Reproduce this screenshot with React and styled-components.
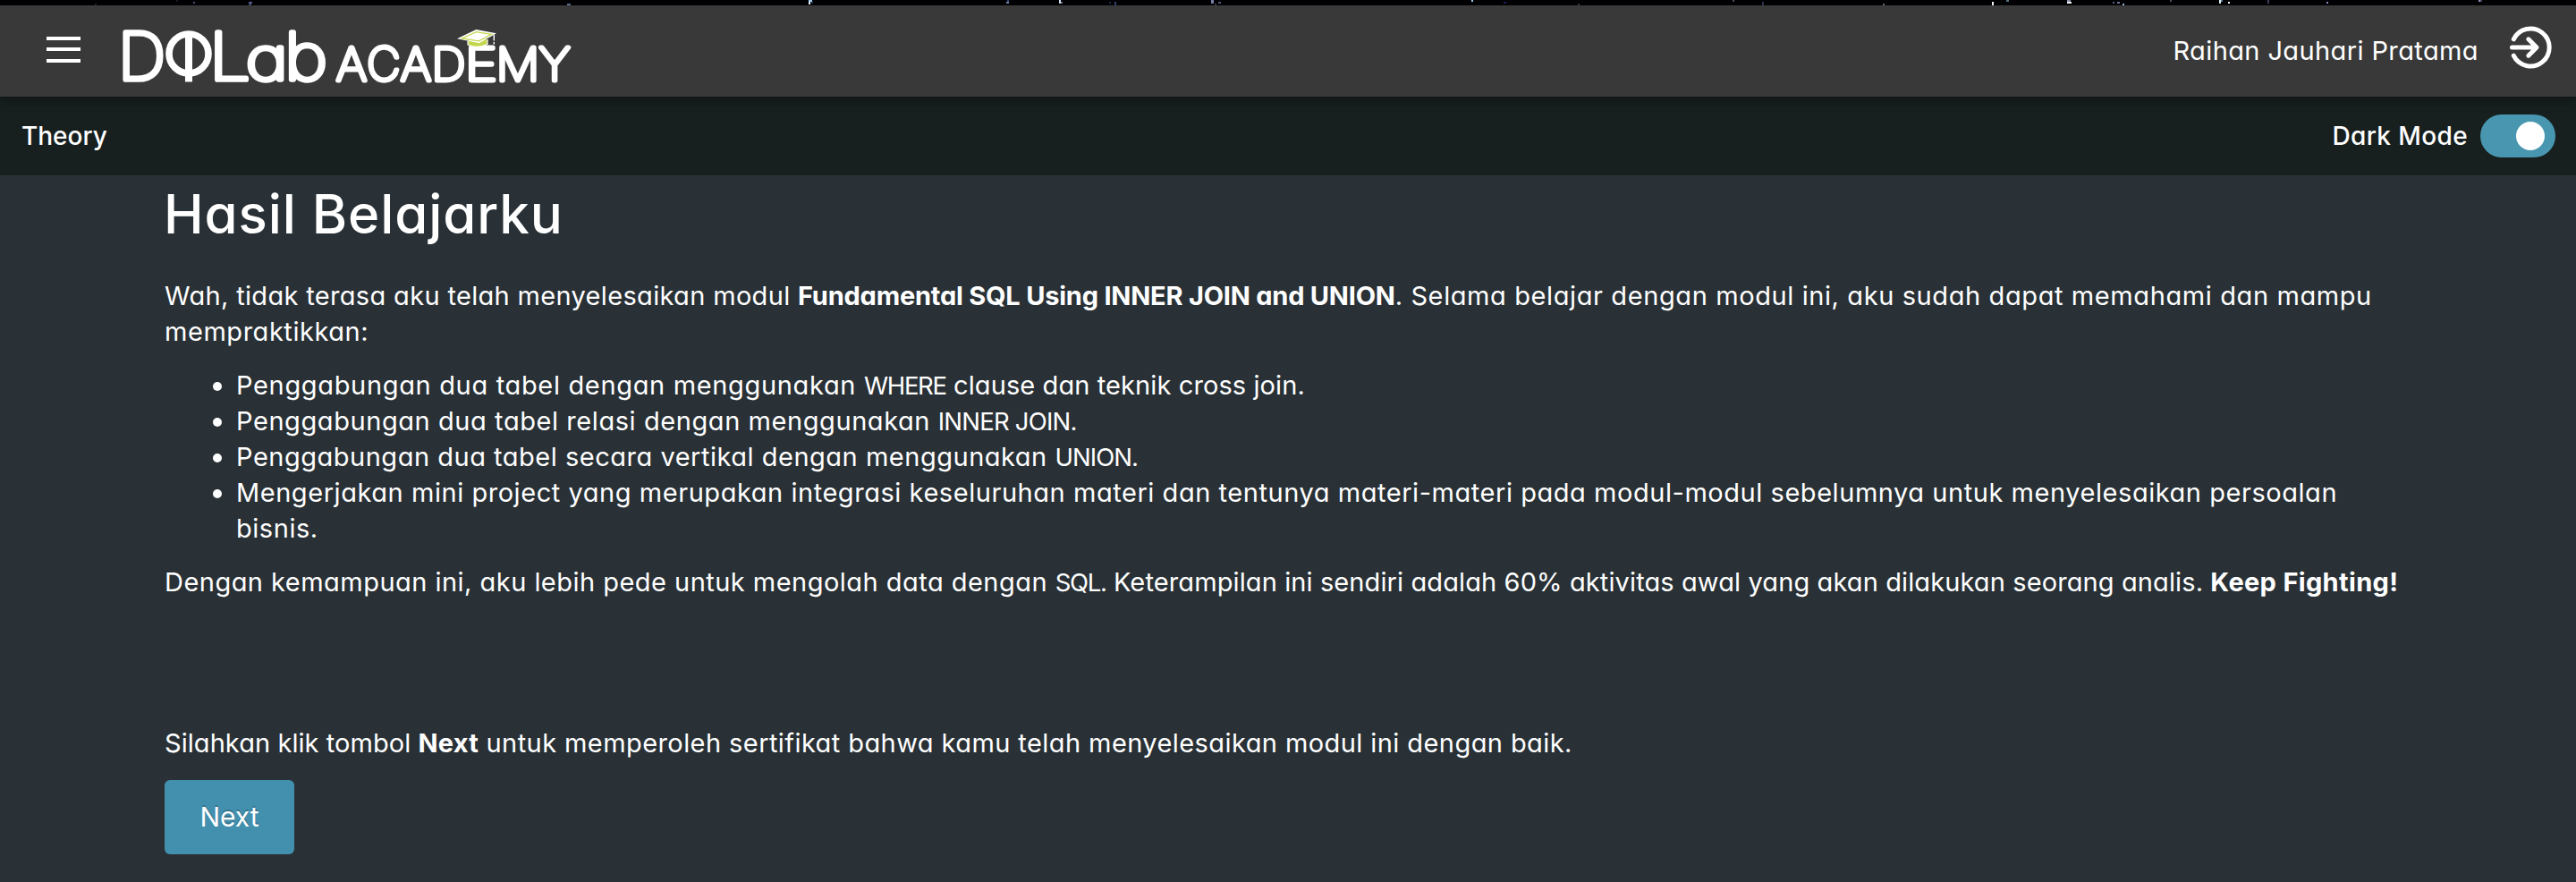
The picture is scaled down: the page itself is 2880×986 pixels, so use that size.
import React, { useState } from 'react';
import styled, { createGlobalStyle } from 'styled-components';

const GlobalStyle = createGlobalStyle`
  * { box-sizing: border-box; }
  body {
    margin: 0;
    background: #293136;
    color: #fff;
    font-family: Inter, "Liberation Sans", sans-serif;
    font-feature-settings: "cv11";
    font-size: 28px;
    line-height: 40px;
  }
`;

const Page = styled.div`
  display: flex;
  flex-direction: column;
  min-height: 986px;
`;

const StarStrip = styled.svg`
  display: block;
  width: 100%;
  height: 6px;
  background: #000003;
`;

const TopBar = styled.header`
  display: flex;
  align-items: center;
  height: 102px;
  padding: 0 27px 0 50px;
  background: #393939;
  box-shadow: 0 4px 12px rgba(0, 0, 0, 0.35);
  z-index: 1;
`;

const IconButton = styled.button`
  display: flex;
  padding: 0 0 ${(p) => p.$lift ?? 0}px;
  border: 0;
  background: none;
  color: #fff;
  cursor: pointer;
`;

const Logo = styled.svg`
  display: block;
  margin-left: 38px;
  overflow: visible;
  font-family: Inter, "Liberation Sans", sans-serif;
  font-weight: 100;
`;

const Account = styled.div`
  display: flex;
  align-items: center;
  gap: 34px;
  margin-left: auto;
  padding-bottom: 8px;
`;

const UserName = styled.span`
  font-size: 29px;
  letter-spacing: 0.39px;
  padding-top: 8px;
`;

const SubBar = styled.div`
  display: flex;
  align-items: center;
  justify-content: space-between;
  height: 88px;
  padding: 0 23px 0 24px;
  background: #17201f;
  font-weight: 500;
`;

const ModeSwitch = styled.label`
  display: flex;
  align-items: center;
  gap: 14px;
  letter-spacing: 0.38px;
`;

const Track = styled.button`
  display: flex;
  align-items: center;
  justify-content: ${(p) => (p.$on ? 'flex-end' : 'flex-start')};
  width: 84px;
  height: 48px;
  padding: 0 12px;
  border: 0;
  border-radius: 24px;
  background: ${(p) => (p.$on ? '#4896b0' : '#8a9499')};
`;

const Knob = styled.span`
  width: 32px;
  height: 32px;
  border-radius: 50%;
  background: #fff;
`;

const Content = styled.main`
  padding: 7px 184px 0;
  font-size: 29px;
`;

const Title = styled.h1`
  margin: 0 0 36px -1px;
  font-size: 60px;
  font-weight: 500;
  line-height: 72px;
  letter-spacing: 0.9px;
`;

const Paragraph = styled.p`
  margin: 0 0 ${(p) => p.$after ?? 20}px;
`;

const Run = styled.span`
  letter-spacing: ${(p) => p.$track}px;
  font-weight: ${(p) => (p.$bold ? 700 : 400)};
`;

const Keyword = styled(Run)`
  font-size: 27.5px;
  line-height: 1;
`;

const List = styled.ul`
  list-style: none;
  margin: 0 0 20px;
  padding: 0 0 0 54px;
`;

const Item = styled.li`
  display: flex;
  gap: 16px;

  &::before {
    content: "";
    flex: none;
    width: 10px;
    height: 10px;
    margin-top: 16px;
    border-radius: 50%;
    background: #fff;
  }
`;

const NextButton = styled.button`
  display: block;
  width: 145px;
  height: 83px;
  padding: 0 0 2px;
  border: 0;
  border-radius: 6px;
  background: #438fae;
  color: #fff;
  font: 400 30px Inter, "Liberation Sans", sans-serif;
  text-shadow: 0 -2px 0 rgba(0, 0, 0, 0.2);
`;

const stars = [
  [106, 4, 2, 2, '#20242c'], [197, 0, 2, 2, '#181c28'], [216, 2, 2, 2, '#4d5580'],
  [278, 2, 4, 2, '#5a6090'], [278, 4, 3, 2, '#404670'], [634, 4, 4, 2, '#5c7795'],
  [904, 0, 4, 2, '#a9d6ff'], [907, 2, 2, 2, '#24405c'], [904, 2, 2, 3, '#fff'],
  [1126, 0, 2, 2, '#36446c'], [1125, 2, 3, 2, '#7582b8'], [1184, 0, 2, 4, '#dce9ff'],
  [1186, 2, 2, 2, '#6e7890'], [1240, 2, 2, 2, '#1c2a4c'], [1246, 2, 2, 4, '#34446c'],
  [1354, 0, 3, 4, '#7c84b0'], [1358, 4, 2, 2, '#404050'], [1362, 2, 3, 2, '#555c7c'],
  [1645, 0, 2, 2, '#a8ccf0'], [1681, 2, 3, 2, '#18205c'], [1764, 4, 2, 2, '#3c3c44'],
  [1937, 0, 2, 2, '#4c4c5c'], [1970, 2, 2, 4, '#2c3458'], [2105, 4, 2, 2, '#6c6c74'],
  [2227, 2, 2, 4, '#fff'], [2243, 0, 3, 2, '#5c7484'], [2311, 0, 4, 2, '#8c94ac'],
  [2311, 2, 5, 2, '#fff'], [2362, 2, 2, 2, '#5c6484'], [2367, 2, 3, 2, '#6c7898'],
  [2373, 4, 2, 2, '#9cc4ec'], [2426, 0, 2, 2, '#54545c'], [2481, 0, 2, 4, '#e8fcff'],
  [2483, 0, 2, 2, '#5c80a4'], [2491, 2, 2, 2, '#fff'], [2535, 0, 2, 4, '#40405c'],
  [2601, 2, 2, 2, '#8c94cc'], [2771, 0, 2, 2, '#8c94bc'], [2773, 0, 2, 2, '#44445c'],
];

const logoLetters = [
  ['D', 132, 89.2, 72, 1.03, 5.7], ['L', 234, 89.2, 73, 1.12, 5.7],
  ['a', 274.8, 89.2, 66, 1.23, 5.4], ['b', 318, 89.2, 72, 1.15, 5.4],
  ['A', 376, 89.6, 51, 1.04, 5], ['C', 410.3, 89.6, 51, 1.01, 5],
  ['A', 448, 89.6, 51, 1.04, 5], ['D', 482.5, 89.6, 51, 1.04, 5],
  ['E', 520, 89.6, 51, 1.2, 5], ['M', 554.8, 89.6, 51, 1.06, 5],
  ['Y', 602.7, 89.6, 51, 1.06, 5],
];

function BrandLogo() {
  return (
    <Logo width="516" height="102" viewBox="130 6 516 102" aria-label="DQLab Academy">
      <g fill="#fff" stroke="#fff" strokeLinejoin="round">
        {logoLetters.map(([char, x, y, size, stretch, weight], i) => (
          <text
            key={i}
            transform={`translate(${x} ${y}) scale(${stretch} 1)`}
            fontSize={size}
            strokeWidth={weight}
          >
            {char}
          </text>
        ))}
      </g>
      <circle cx="211" cy="60" r="22" fill="none" stroke="#fff" strokeWidth="7.6" />
      <rect x="207" y="38" width="8" height="53.5" fill="#fff" />
      <path d="M523 46V50Q533 55 545 49.5V44" fill="#c4d64c" stroke="#fff" strokeWidth="1.2" />
      <path d="M511 43.3L532.3 33L555 37.3L535.7 48.2Z" fill="#fff" />
      <path d="M516.5 43L532.4 35.6L549.5 38.3L535.5 45.9Z" fill="#fff" stroke="#c4d64c" strokeWidth="1.3" />
      <path d="M552.3 39V45.5M552.3 47V49.5" stroke="#fff" strokeWidth="1.4" />
    </Logo>
  );
}

export default function App() {
  const [dark, setDark] = useState(true);
  return (
    <>
      <GlobalStyle />
      <Page>
        <StarStrip>
          {stars.map(([x, y, w, h, fill]) => (
            <rect key={`${x}-${y}`} x={x} y={y} width={w} height={h} fill={fill} />
          ))}
        </StarStrip>
        <TopBar>
          <IconButton $lift={4} aria-label="Menu">
            <svg width="42" height="38" viewBox="50 36 42 38">
              <path d="M52 43H90M52 55H90M52 68H90" stroke="#fff" strokeWidth="3.8" />
            </svg>
          </IconButton>
          <BrandLogo />
          <Account>
            <UserName>Raihan Jauhari Pratama</UserName>
            <IconButton aria-label="Log out">
              <svg width="48" height="50" viewBox="2805 28 48 50" fill="none" stroke="#fff" strokeWidth="5" strokeLinecap="round" strokeLinejoin="round">
                <path d="M2810.3 43.8A21 21 0 1 1 2810.3 62.2" />
                <path d="M2808.5 53H2835M2826.8 43.8L2836 53L2826.8 62.2" />
              </svg>
            </IconButton>
          </Account>
        </TopBar>
        <SubBar>
          <span>Theory</span>
          <ModeSwitch>
            Dark Mode
            <Track $on={dark} onClick={() => setDark(!dark)} aria-label="Dark Mode">
              <Knob />
            </Track>
          </ModeSwitch>
        </SubBar>
        <Content>
          <Title>Hasil Belajarku</Title>
          <Paragraph>
            <Run $track={0.33}>Wah, tidak terasa aku telah menyelesaikan modul </Run>
            <Run $bold $track={-0.22}>Fundamental SQL Using INNER JOIN and UNION</Run>
            <Run $track={0.6}>. Selama belajar dengan modul ini, aku sudah dapat memahami dan mampu </Run>
            <Run $track={0.54}>mempraktikkan:</Run>
          </Paragraph>
          <List>
            <Item>
              <div>
                <Run $track={0.66}>Penggabungan dua tabel dengan menggunakan </Run>
                <Keyword $track={-1.3}>WHERE</Keyword>
                <Run $track={0.1}> clause dan teknik cross join.</Run>
              </div>
            </Item>
            <Item>
              <div>
                <Run $track={0.57}>Penggabungan dua tabel relasi dengan menggunakan </Run>
                <Keyword $track={-0.8}>INNER JOIN.</Keyword>
              </div>
            </Item>
            <Item>
              <div>
                <Run $track={0.51}>Penggabungan dua tabel secara vertikal dengan menggunakan </Run>
                <Keyword $track={-0.95}>UNION.</Keyword>
              </div>
            </Item>
            <Item>
              <Run $track={0.545}>
                Mengerjakan mini project yang merupakan integrasi keseluruhan materi dan tentunya materi-materi pada modul-modul sebelumnya untuk menyelesaikan persoalan bisnis.
              </Run>
            </Item>
          </List>
          <Paragraph $after={140}>
            <Run $track={0.47}>Dengan kemampuan ini, aku lebih pede untuk mengolah data dengan </Run>
            <Keyword $track={-1.3}>SQL.</Keyword>
            <Run $track={0.11}> Keterampilan ini sendiri adalah 60% aktivitas awal yang akan dilakukan seorang analis. </Run>
            <Run $bold $track={0.33}>Keep Fighting!</Run>
          </Paragraph>
          <Paragraph $after={21}>
            <Run $track={0.06}>Silahkan klik tombol </Run>
            <Run $bold $track={0.2}>Next</Run>
            <Run $track={0.42}> untuk memperoleh sertifikat bahwa kamu telah menyelesaikan modul ini dengan baik.</Run>
          </Paragraph>
          <NextButton>Next</NextButton>
        </Content>
      </Page>
    </>
  );
}
